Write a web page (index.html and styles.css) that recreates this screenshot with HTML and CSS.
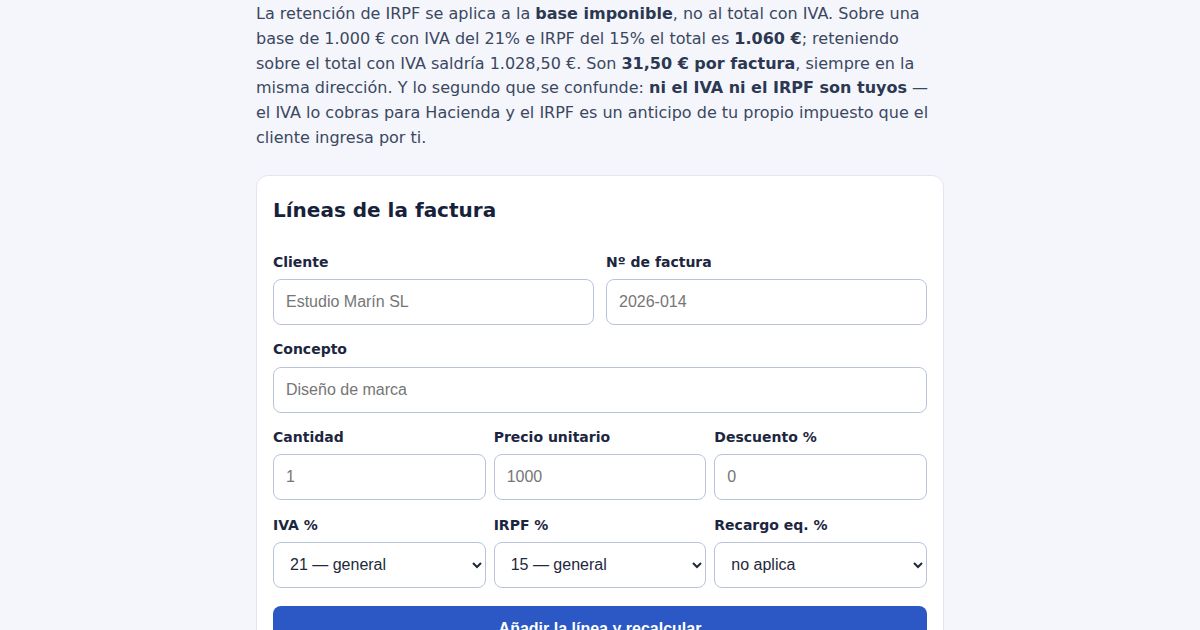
FILE: index.html
```html
<!DOCTYPE html>
<html lang="es">
<head>
<meta charset="utf-8">
<link rel="stylesheet" href="styles.css">
</head>
<body>
<main class="wrap">
  <p class="intro">La retención de IRPF se aplica a la <strong>base imponible</strong>, no al total con IVA. Sobre una base de 1.000 € con IVA del 21% e IRPF del 15% el total es <strong>1.060 €</strong>; reteniendo sobre el total con IVA saldría 1.028,50 €. Son <strong>31,50 € por factura</strong>, siempre en la misma dirección. Y lo segundo que se confunde: <strong>ni el IVA ni el IRPF son tuyos</strong> — el IVA lo cobras para Hacienda y el IRPF es un anticipo de tu propio impuesto que el cliente ingresa por ti.</p>

  <section class="card">
    <h2 class="card-title">Líneas de la factura</h2>

    <div class="row row-2">
      <div class="field">
        <label class="lbl">Cliente</label>
        <input class="inp" type="text" placeholder="Estudio Marín SL">
      </div>
      <div class="field">
        <label class="lbl">Nº de factura</label>
        <input class="inp" type="text" placeholder="2026-014">
      </div>
    </div>

    <div class="row">
      <div class="field">
        <label class="lbl">Concepto</label>
        <input class="inp" type="text" placeholder="Diseño de marca">
      </div>
    </div>

    <div class="row row-3">
      <div class="field">
        <label class="lbl">Cantidad</label>
        <input class="inp" type="text" placeholder="1">
      </div>
      <div class="field">
        <label class="lbl">Precio unitario</label>
        <input class="inp" type="text" placeholder="1000">
      </div>
      <div class="field">
        <label class="lbl">Descuento %</label>
        <input class="inp" type="text" placeholder="0">
      </div>
    </div>

    <div class="row row-3">
      <div class="field">
        <label class="lbl">IVA %</label>
        <select class="sel"><option>21 — general</option></select>
      </div>
      <div class="field">
        <label class="lbl">IRPF %</label>
        <select class="sel"><option>15 — general</option></select>
      </div>
      <div class="field">
        <label class="lbl">Recargo eq. %</label>
        <select class="sel"><option>no aplica</option></select>
      </div>
    </div>

    <button class="btn" type="button">Añadir la línea y recalcular</button>
  </section>
</main>
</body>
</html>
```
FILE: styles.css
```css
* { box-sizing: border-box; }
html, body { margin: 0; padding: 0; }
body {
  background: #f4f6fb;
  font-family: "DejaVu Sans", sans-serif;
  color: #3b4761;
  overflow: hidden;
}
.wrap {
  width: 688px;
  margin: 0 auto;
  padding-top: 2px;
}
.intro {
  margin: 0 0 24px 0;
  font-size: 16px;
  line-height: 24.8px;
}
.intro strong {
  color: #2c3852;
  font-weight: bold;
}
.card {
  background: #ffffff;
  border: 1px solid #e1e6f0;
  border-radius: 12px;
  padding: 19px 16px 16px 16px;
}
.card-title {
  margin: 0 0 27px 0;
  font-size: 20px;
  line-height: 30px;
  font-weight: bold;
  color: #17213a;
}
.row {
  display: grid;
  grid-template-columns: 1fr;
  gap: 12px;
  margin-bottom: 14.3px;
}
.row-2 { grid-template-columns: 1fr 1fr; }
.row-3 { grid-template-columns: 1fr 1fr 1fr; gap: 8px; }
.field { display: flex; flex-direction: column; }
.lbl {
  font-size: 14px;
  line-height: 20px;
  font-weight: bold;
  color: #1c2640;
  margin-bottom: 7.3px;
}
.inp, .sel {
  height: 46px;
  width: 100%;
  border: 1px solid #b9c4db;
  border-radius: 8px;
  background: #ffffff;
  font-family: "Liberation Sans", Arial, sans-serif;
  font-size: 16px;
  color: #1e293b;
}
.inp { padding: 0 12px; }
.inp::placeholder { color: #767676; }
.sel { padding: 0 12px; }
.btn {
  display: block;
  width: 100%;
  height: 46px;
  margin-top: 18px;
  border: none;
  border-radius: 8px;
  background: #2b58c4;
  color: #ffffff;
  font-family: "Liberation Sans", Arial, sans-serif;
  font-size: 16px;
  font-weight: bold;
}
```
